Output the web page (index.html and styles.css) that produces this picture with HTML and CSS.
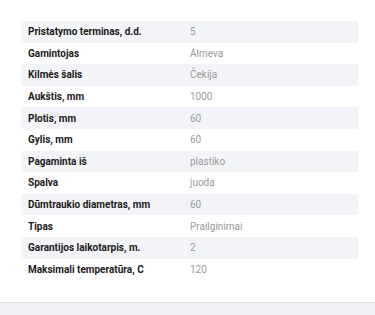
FILE: index.html
```html
<!DOCTYPE html>
<html lang="lt">
<head>
    <meta charset="UTF-8">
    <meta name="viewport" content="width=device-width, initial-scale=1.0">
    <title>Savybės</title>
    <link rel="stylesheet" href="styles.css">
</head>
<body>
    <div class="specs">
        <table class="spec-table">
            <tr><th>Pristatymo terminas, d.d.</th><td>5</td></tr>
            <tr><th>Gamintojas</th><td>Almeva</td></tr>
            <tr><th>Kilmės šalis</th><td>Čekija</td></tr>
            <tr><th>Aukštis, mm</th><td>1000</td></tr>
            <tr><th>Plotis, mm</th><td>60</td></tr>
            <tr><th>Gylis, mm</th><td>60</td></tr>
            <tr><th>Pagaminta iš</th><td>plastiko</td></tr>
            <tr><th>Spalva</th><td>juoda</td></tr>
            <tr><th>Dūmtraukio diametras, mm</th><td>60</td></tr>
            <tr><th>Tipas</th><td>Prailginimai</td></tr>
            <tr><th>Garantijos laikotarpis, m.</th><td>2</td></tr>
            <tr><th>Maksimali temperatūra, C</th><td>120</td></tr>
        </table>
    </div>
    <div class="footer"></div>
</body>
</html>
```

FILE: styles.css
```css
body {
    margin: 0;
    padding: 0;
    font-family: Roboto, "Liberation Sans", sans-serif;
    background-color: #fff;
}
.specs {
    padding: 21px 17px 22px 21px;
}
.spec-table {
    width: 100%;
    border-collapse: collapse;
    font-size: 10px;
}
.spec-table tr {
    height: 21.6px;
}
.spec-table tr:nth-child(odd) {
    background-color: #f3f4f7;
}
.spec-table th {
    text-align: left;
    font-weight: 700;
    color: #1a1a1a;
    padding: 0 0 0 7px;
    width: 162px;
}
.spec-table td {
    color: #9a9a9a;
    padding: 0;
}
.footer {
    border-top: 1px solid #e2e2e6;
    background-color: #f1f1f5;
    height: 12px;
}
```
